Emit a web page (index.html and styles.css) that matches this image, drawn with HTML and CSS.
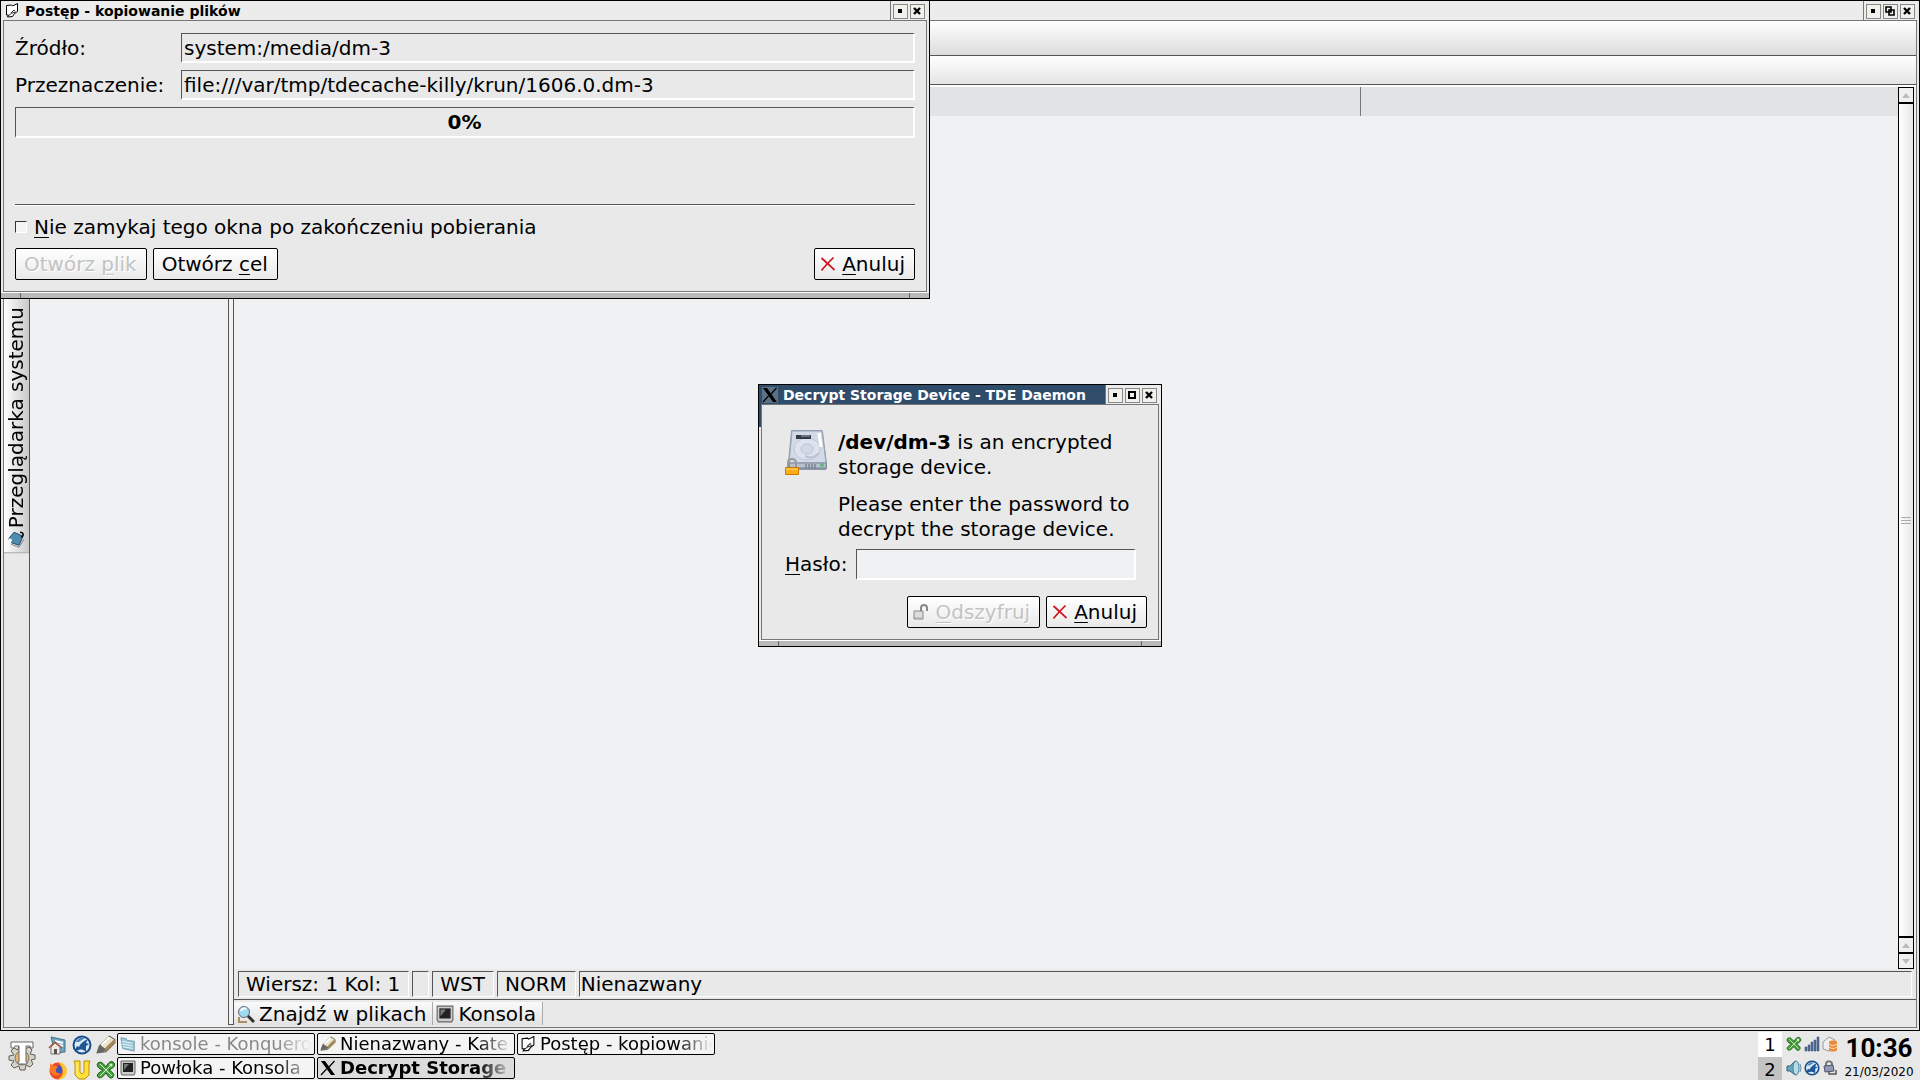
FILE: index.html
```html
<!DOCTYPE html>
<html lang="pl">

<head>
	<meta charset="utf-8">
	<meta name="viewport" content="width=device-width, initial-scale=1.0">
	<title>Decrypt Storage Device - TDE Daemon</title>
	<link rel="stylesheet" href="styles.css">
</head>

<body>
	<svg class="sprite" aria-hidden="true">
		<symbol id="min" viewBox="0 0 11 11"><path d="M3 3h4v4H3z"/></symbol>
		<symbol id="max" viewBox="0 0 11 11"><path d="M1 1h8v8H1zM3 3v4h4V3z" fill-rule="evenodd"/></symbol>
		<symbol id="restore" viewBox="0 0 11 11"><path d="M1 1h5v5H1zM4 4h5v5H4z" fill="none" stroke="#000" stroke-width="1.600"/></symbol>
		<symbol id="close" viewBox="0 0 11 11"><path d="M2 2l6 6M8 2l-6 6" fill="none" stroke="#000" stroke-width="2.400"/></symbol>
		<symbol id="paper" viewBox="0 0 14 15"><path d="M1.500 2.500l5-.500 1 1 5-2.500v8l-3 2-2 3-5 .500 1-2H1.500z" fill="#fff" stroke="#000"/><path d="M3 13l4-3 4-1M6 10l3-3 1 1" fill="none" stroke="#333"/></symbol>
		<symbol id="xorg" viewBox="0 0 16 16"><path d="M1 1h4l10 14h-4z" fill="#000"/><path d="M14.500 1L9 7M6.500 9L1 15" fill="none" stroke="#000" stroke-width="1.200"/></symbol>
		<symbol id="cross" viewBox="0 0 16 16"><path d="M1.500 2C5 5 10 10 14.500 14M13.500 1.500C9 6 5 10 1.500 14.500" fill="none" stroke="#d0101c" stroke-width="1.700"/></symbol>
		<symbol id="pen" viewBox="0 0 18 18"><path d="M1 16l2-6 9-9 5 3v3l-8 8z" fill="#e9e2ce" stroke="#6c6353"/><path d="M7 13l9-9 1 3-8 8z" fill="#a5854f"/><path d="M1 16l2-6 1-1 5 4-2 2z" fill="#666"/><path d="M5 9l7-7" stroke="#fff" stroke-width="2"/></symbol>
		<symbol id="konsole" viewBox="0 0 16 16"><path d="M1 1h14v12l-1 2H2l-1-2z" fill="#ccc" stroke="#666"/><path d="M3 3h10v9H3z" fill="#222"/><path d="M4 4h5l-5 6z" fill="#777"/></symbol>
		<symbol id="globe" viewBox="0 0 20 20"><circle cx="10" cy="10" r="8.500" fill="#dce9f6" stroke="#174e89" stroke-width="2"/><path d="M3 15c1-1 1-3 2-4l2 1c1-3 4-6 9-8l-2 4 3 1-3 2v6c-2-2-4-3-7-2-1 0-2 1-4 0z" fill="#1f5796"/><path d="M3 7l5-4 5 0-6 4z" fill="#4d83bb"/></symbol>
		<symbol id="clover" viewBox="0 0 20 20"><path d="M2 3c3-2 5 0 8 4 2-5 6-7 8-4 2 3-1 5-5 7 4 2 6 5 4 7-3 3-5-1-7-4-3 4-6 6-8 4-2-3 1-4 5-7-5-1-7-5-5-7z" fill="#47a13d" stroke="#1d5a1a"/><path d="M4 4l12 12M14 6L4 16" stroke="#d8f0d0"/><circle cx="15" cy="5" r="1.500" fill="#d8f0d0"/></symbol>
		<symbol id="folder" viewBox="0 0 18 18"><path d="M1 2l6 1 1 2 8 1v11L3 14z" fill="#9cc9da" stroke="#6b93a5"/><path d="M2 6l12 2M2 9l12 2M3 12l11 2" stroke="#e8f6fb"/></symbol>
	</svg>

	<main class="window editor">
		<div class="title">
			<div class="title-buttons">
				<button aria-label="Minimalizuj"><svg><use href="#min"/></svg></button>
				<button aria-label="Przywróć"><svg><use href="#restore"/></svg></button>
				<button aria-label="Zamknij"><svg><use href="#close"/></svg></button>
			</div>
		</div>
		<div class="frame">
			<div class="menubar"></div>
			<div class="toolbar"></div>
			<div class="workspace">
				<nav class="sidebar">
					<button class="side-tab">
						<svg viewBox="0 0 18 18"><path d="M2 8l5-6 9 4-4 9-9-3z" fill="#4d8eb0" stroke="#244c63"/><path d="M2 8l3 1-1 4-2-1z" fill="#fff"/><path d="M4 14l8 3 5-8" fill="none" stroke="#888"/><path d="M13 2c4 0 4 4 1 5" fill="none" stroke="#000" stroke-width="1.500"/></svg>
						<span>Przeglądarka systemu</span>
					</button>
				</nav>
				<div class="list"></div>
				<div class="splitter"></div>
				<section class="document">
					<div class="view">
						<div class="page">
							<div class="line"><span></span><span></span></div>
						</div>
						<div class="scrollbar">
							<button class="arrow up" aria-label="W górę"></button>
							<div class="thumb"><i></i></div>
							<button class="arrow up" aria-label="W górę"></button>
							<button class="arrow down" aria-label="W dół"></button>
						</div>
					</div>
					<div class="status">
						<span class="cell">Wiersz: 1 Kol: 1</span>
						<span class="cell"></span>
						<span class="cell">WST</span>
						<span class="cell">NORM</span>
						<span class="cell name">Nienazwany</span>
					</div>
					<div class="tools">
						<button><svg viewBox="0 0 18 18"><path d="M10 10l7 7" stroke="#333" stroke-width="3"/><path d="M2 12v5h8" fill="none" stroke="#a99060" stroke-width="2"/><circle cx="7" cy="7" r="5.500" fill="#9fdcf0" stroke="#667"/><path d="M4 6c1-3 4-3 5-2" fill="none" stroke="#fff" stroke-width="2"/></svg>Znajdź w plikach</button>
						<button><svg><use href="#konsole"/></svg>Konsola</button>
					</div>
				</section>
			</div>
		</div>
	</main>

	<section class="window progress">
		<div class="title">
			<svg class="title-icon"><use href="#paper"/></svg>
			<h2>Postęp - kopiowanie plików</h2>
			<div class="title-buttons">
				<button aria-label="Minimalizuj"><svg><use href="#min"/></svg></button>
				<button aria-label="Zamknij"><svg><use href="#close"/></svg></button>
			</div>
		</div>
		<form class="frame">
			<div class="paths">
				<label for="source">Źródło:</label>
				<input class="field" id="source" type="text" value="system:/media/dm-3" readonly>
				<label for="target">Przeznaczenie:</label>
				<input class="field" id="target" type="text" value="file:///var/tmp/tdecache-killy/krun/1606.0.dm-3" readonly>
			</div>
			<div class="bar" role="progressbar" aria-valuenow="0">0%</div>
			<hr>
			<label class="keep"><input type="checkbox"><span><u>N</u>ie zamykaj tego okna po zakończeniu pobierania</span></label>
			<div class="buttons">
				<button class="push" type="button" disabled><span>Otwórz <u>p</u>lik</span></button>
				<button class="push" type="button"><span>Otwórz <u>c</u>el</span></button>
				<button class="push cancel" type="button"><svg><use href="#cross"/></svg><span><u>A</u>nuluj</span></button>
			</div>
		</form>
		<div class="grip"></div>
	</section>

	<section class="window decrypt">
		<div class="title">
			<svg class="title-icon"><use href="#xorg"/></svg>
			<h2>Decrypt Storage Device - TDE Daemon</h2>
			<div class="title-buttons">
				<button aria-label="Minimalizuj"><svg><use href="#min"/></svg></button>
				<button aria-label="Maksymalizuj"><svg><use href="#max"/></svg></button>
				<button aria-label="Zamknij"><svg><use href="#close"/></svg></button>
			</div>
		</div>
		<form class="frame">
			<div class="message">
				<svg class="disk" viewBox="0 0 44 47">
					<path d="M6 2q0-1 2-1h28q2 0 2 2l4 32v4q0 2-2 2H5q-2 0-2-2v-5z" fill="#8d97ab"/>
					<path d="M7 2h30l4 32H4z" fill="#d3dae7" stroke="#9aa5b8"/>
					<path d="M4 34h37v5H5z" fill="#b8c0ce" stroke="#7c879b"/>
					<ellipse cx="22" cy="20" rx="13" ry="11" fill="#dde3ee" stroke="#c0c8d6"/>
					<ellipse cx="22" cy="20" rx="6" ry="5" fill="#d3dae7" stroke="#b9c2d1"/>
					<path d="M20 27q8 4 14-3" fill="none" stroke="#b9c2d1" stroke-width="2"/>
					<path d="M11 6h15v4H11z" fill="#333a46"/><path d="M16 7h9" stroke="#aaa"/>
					<path d="M34 4l2 14" stroke="#fff" stroke-width="3"/>
					<path d="M21 35v4M24 35v4M27 35v4M30 35v4" stroke="#5c6577"/>
					<circle cx="37" cy="36" r="2" fill="#63b77c"/>
					<path d="M3 38v-4q0-4 4-4t4 4v4" fill="none" stroke="#999" stroke-width="2"/>
					<path d="M.500 38.500h13v7H.500z" fill="#ffae18" stroke="#c77904"/><path d="M1 40h12" stroke="#ffd45c"/>
				</svg>
				<div>
					<p><b>/dev/dm-3</b> is an encrypted storage device.</p>
					<p>Please enter the password to decrypt the storage device.</p>
				</div>
			</div>
			<div class="password">
				<label for="password"><u>H</u>asło:</label>
				<input class="field" id="password" type="password">
			</div>
			<div class="buttons">
				<button class="push" type="button" disabled><svg viewBox="0 0 16 16"><path d="M1 7h9v8H1z" fill="#ddd" stroke="#888"/><path d="M8 7V4c0-4 6-4 6 0v3" fill="none" stroke="#888" stroke-width="2"/><path d="M2 14h8" stroke="#aaa"/></svg><span><u>O</u>dszyfruj</span></button>
				<button class="push" type="button"><svg><use href="#cross"/></svg><span><u>A</u>nuluj</span></button>
			</div>
		</form>
		<div class="grip"></div>
	</section>

	<footer class="taskbar">
		<button class="start" aria-label="Menu">
			<svg viewBox="0 0 30 30"><path d="M12 4h5l1 4 4-2 3 3-2 4 5 1v4l-4 1 2 4-3 3-4-2-1 5h-5l-1-4-5 2-3-3 3-4-5-1v-4l5-1-3-4 3-3 4 2z" fill="#d5d2c8" stroke="#625e56"/><circle cx="15" cy="17" r="7" fill="#e3b86f" stroke="#777"/><path d="M4 1h22v6h-2l-1-2h-4v16h1v2h-9v-2h1V5H8L7 7H4z" fill="#fff" stroke="#666"/></svg>
		</button>
		<div class="launchers">
			<button aria-label="Katalog domowy"><svg viewBox="0 0 20 20"><path d="M3 2l14 3v12l-10 1z" fill="#6da4c4" stroke="#46718a"/><path d="M7 6l8 2M7 9l8 2" stroke="#fff" stroke-width="2"/><path d="M3 12v7h9v-7L7 8z" fill="#f1e8de" stroke="#777"/><path d="M1 13l6-6 7 6" fill="none" stroke="#9b5c43" stroke-width="1.500"/><path d="M6 14h3v5H6z" fill="#555"/></svg></button>
			<button aria-label="Konqueror"><svg><use href="#globe"/></svg></button>
			<button aria-label="Kate"><svg><use href="#pen"/></svg></button>
			<button aria-label="Firefox"><svg viewBox="0 0 20 20"><circle cx="10" cy="11" r="8.500" fill="#f04a22"/><path d="M10 2c5 0 9 5 9 10-1 5-5 8-9 7 4-2 6-6 4-10 0-3-2-5-4-7z" fill="#ffc52e"/><circle cx="10" cy="10" r="4.500" fill="#3f55c0"/><path d="M2 3c1 2 3 3 6 3 2 0 2 2 0 3-1 3 1 5 5 4-3 4-9 3-11-2z" fill="#fa7a24"/></svg></button>
			<button aria-label="Magnes"><svg viewBox="0 0 20 20"><path d="M2 1h6v11l2 2 2-2V1h6l-1 3v11l-4 4H7l-4-4V4z" fill="#ffdf3a" stroke="#bf9108"/><path d="M5 3v11l3 3" fill="none" stroke="#fff3a0"/></svg></button>
			<button aria-label="Narzędzia"><svg><use href="#clover"/></svg></button>
		</div>
		<div class="tasks">
			<button class="minimized"><svg><use href="#folder"/></svg><span>konsole - Konquero</span></button>
			<button><svg><use href="#pen"/></svg><span>Nienazwany - Kate</span></button>
			<button><svg><use href="#paper"/></svg><span>Postęp - kopiowanie</span></button>
			<button><svg><use href="#konsole"/></svg><span>Powłoka - Konsola</span></button>
			<button class="active"><svg><use href="#xorg"/></svg><span>Decrypt Storage</span></button>
		</div>
		<div class="pager">
			<button class="current">1</button>
			<button>2</button>
		</div>
		<div class="tray">
			<svg><use href="#clover"/></svg>
			<svg viewBox="0 0 16 16"><path d="M1 11h2v4H1zM4 9h2v6H4zM7 6h2v9H7zM10 4h2v11h-2zM13 1h2v14h-2z" fill="#536f9c" stroke="#33486d" stroke-width=".5"/></svg>
			<svg viewBox="0 0 16 16"><path d="M1 6l6-5 6 3v9l-6 2-6-2z" fill="#eee" stroke="#999"/><path d="M7 6c0-2 8-2 8 0v8c0 2-8 2-8 0z" fill="#e98a39"/><path d="M7 8c2 2 6 2 8 0M7 11c2 2 6 2 8 0" fill="none" stroke="#ffe0b8"/></svg>
			<svg viewBox="0 0 16 16"><path d="M1 6h3l5-5v14l-5-4H1z" fill="#65a6bd" stroke="#3b6678"/><ellipse cx="10" cy="8" rx="3" ry="7" fill="#b7dce8" stroke="#4b7d91"/><path d="M14 4q2 4 0 8" fill="none" stroke="#5a91a5"/></svg>
			<svg><use href="#globe"/></svg>
			<svg viewBox="0 0 16 16"><path d="M4 7V4c0-4 6-3 6 0v2" fill="none" stroke="#777" stroke-width="2"/><path d="M2 6l9-1 1 6-9 1z" fill="#9299b5" stroke="#4c526e"/><path d="M7 12v2h7v-4" fill="none" stroke="#555" stroke-width="1.500"/></svg>
		</div>
		<div class="clock">
			<time class="hour">10:36</time>
			<time class="date">21/03/2020</time>
		</div>
	</footer>
</body>

</html>
```
FILE: styles.css
```css
* {
	margin: 0;
	padding: 0;
	box-sizing: border-box;
}

body {
	height: 100vh;
	display: flex;
	flex-direction: column;
	overflow: hidden;
	background: #e8e8e8;
	font-family: "DejaVu Sans", sans-serif;
	font-size: 20px;
	line-height: 25px;
	color: #000;
}

button,
input {
	font: inherit;
	color: inherit;
	border: none;
	background: none;
	border-radius: 0;
}

svg {
	display: block;
	flex: none;
	width: 16px;
	height: 16px;
}

.sprite {
	position: absolute;
	width: 0;
	height: 0;
}

u {
	text-decoration-thickness: 1px;
	text-underline-offset: 3px;
}

/* windows */

.window {
	display: flex;
	flex-direction: column;
	background: #e9e9e9;
	border: 1px solid #000;
	padding: 0 2px;
}

.title {
	display: flex;
	align-items: center;
	height: 19px;
	background: #ececec;
	flex: none;
}

.title h2 {
	flex: 1;
	font-size: 14px;
	line-height: 18px;
	white-space: nowrap;
}

.title-icon {
	width: 14px;
	height: 15px;
	margin: 0 6px 0 2px;
}

.title-buttons {
	display: flex;
	align-items: center;
	gap: 2px;
	height: 19px;
	margin-left: auto;
	padding: 2px 2px 0;
	background: #ececec;
	border-left: 1px solid #777;
}

.title-buttons button {
	width: 15px;
	height: 15px;
	padding: 1px;
	background: #f1f1ec;
	border: 1px solid #888;
}

.title-buttons svg {
	width: 11px;
	height: 11px;
}

.frame {
	border: 1px solid #777;
}

.grip {
	display: flex;
	justify-content: space-between;
	height: 6px;
	margin: 0 -2px;
	background: #b9b9b9;
	border-top: 1px solid #fff;
}

.grip::before,
.grip::after {
	content: "";
	width: 19px;
	border-right: 1px solid #666;
}

.grip::after {
	border-right: none;
	border-left: 1px solid #666;
}

.field {
	min-width: 0;
	height: 30px;
	padding: 0 2px;
	border: 1px solid #555;
	border-right: 2px solid #fff;
	border-bottom: 2px solid #fff;
	outline: none;
}

.push {
	display: flex;
	align-items: center;
	gap: 6px;
	height: 32px;
	padding: 0 9px 0 8px;
	border: 1px solid #000;
	border-radius: 2px;
	background: linear-gradient(#fff, #e9e9e9);
	white-space: pre;
}

.push:disabled {
	color: #c3c3c3;
	text-shadow: 1px 1px #fff;
}

.push svg {
	margin-left: -3px;
}

.buttons {
	display: flex;
	gap: 6px;
}

/* editor */

.editor {
	flex: 1;
	min-height: 0;
	padding-bottom: 2px;
}

.editor > .frame {
	flex: 1;
	min-height: 0;
	display: flex;
	flex-direction: column;
}

.menubar {
	height: 35px;
	background: linear-gradient(#fff, #dcdcdc);
	border-bottom: 1px solid #555;
}

.toolbar {
	height: 29px;
	background: linear-gradient(#fff, #e4e4e4);
	border-bottom: 1px solid #555;
}

.workspace {
	flex: 1;
	min-height: 0;
	display: flex;
	border-top: 2px solid #fff;
}

.sidebar {
	width: 26px;
	padding-top: 212px;
	border-right: 1px solid #555;
}

.side-tab {
	display: flex;
	align-items: center;
	gap: 2px;
	width: 25px;
	padding: 4px 0 8px;
	writing-mode: vertical-rl;
	transform: rotate(180deg);
	background: linear-gradient(to left, #fff, #c8c8c8);
	border-top: 1px solid #aaa;
}

.side-tab svg {
	width: 18px;
	height: 18px;
	transform: rotate(180deg);
}

.list {
	width: 198px;
	background: #eff1f3;
}

.splitter {
	width: 6px;
	margin-bottom: 2px;
	background: #f2f2f2;
	border: 1px solid #555;
	border-top: none;
}

.document {
	flex: 1;
	min-width: 0;
	display: flex;
	flex-direction: column;
}

.view {
	flex: 1;
	min-height: 0;
	display: flex;
	padding-right: 2px;
	background: #eff1f3;
}

.page {
	flex: 1;
}

.line {
	display: grid;
	grid-template-columns: 1126fr 538fr;
	height: 29px;
	background: #e2e3e4;
}

.line span + span {
	border-left: 1px solid #777;
}

.scrollbar {
	display: flex;
	flex-direction: column;
	width: 16px;
	border: 1px solid #000;
	background: #fff;
}

.arrow {
	display: flex;
	align-items: center;
	justify-content: center;
	height: 16px;
	background: #f0f0f0;
	border-bottom: 2px solid #000;
}

.arrow::before {
	content: "";
	border: 4px solid transparent;
	border-top: none;
	border-bottom: 5px solid #bbb;
}

.arrow.down {
	height: 14px;
	border-bottom: none;
}

.arrow.down::before {
	border-bottom: none;
	border-top: 5px solid #bbb;
}

.thumb {
	flex: 1;
	display: flex;
	align-items: center;
	justify-content: center;
	background: linear-gradient(to right, #fff, #e6e6e6);
	border-bottom: 2px solid #000;
}

.thumb i {
	width: 10px;
	height: 7px;
	border: 1px solid #aaa;
	border-width: 1px 0;
	background: linear-gradient(transparent 40%, #aaa 40%, #aaa 60%, transparent 60%);
}

.status {
	display: flex;
	gap: 3px;
	padding: 2px 4px;
	border-bottom: 1px solid #555;
}

.cell {
	height: 26px;
	padding: 0 8px 0 7px;
	border: 1px solid #555;
	border-right-color: #fff;
	border-bottom-color: #fff;
}

.cell.name {
	flex: 1;
	padding: 0 1px;
}

.tools {
	display: flex;
	height: 27px;
	padding: 2px 0;
}

.tools button {
	display: flex;
	align-items: center;
	gap: 4px;
	padding: 1px 6px 0 3px;
	background: linear-gradient(#fafafa, #e2e2e2);
	border-right: 1px solid #aaa;
}

.tools svg {
	width: 18px;
	height: 18px;
}

/* copy progress */

.progress {
	position: absolute;
	top: 0;
	left: 0;
	width: 930px;
}

.progress .frame {
	padding: 12px 11px 11px 11px;
}

.paths {
	display: grid;
	grid-template-columns: 158px 1fr;
	align-items: center;
	gap: 7px 8px;
}

.bar {
	height: 31px;
	margin-top: 7px;
	text-align: center;
	line-height: 29px;
	font-weight: bold;
	border: 1px solid #555;
	border-right: 2px solid #fff;
	border-bottom: 2px solid #fff;
}

.progress hr {
	margin: 66px 0 8px;
	border: none;
	border-top: 1px solid #555;
	border-bottom: 1px solid #fff;
}

.keep {
	display: flex;
	align-items: center;
	gap: 7px;
	height: 26px;
}

.keep input {
	appearance: none;
	width: 12px;
	height: 12px;
	background: #f4f4f4;
	border: 1px solid #333;
	border-right-color: #fff;
	border-bottom-color: #fff;
}

.progress .buttons {
	margin-top: 8px;
}

.cancel {
	margin-left: auto;
}

/* password dialog */

.decrypt {
	position: absolute;
	top: 384px;
	left: 758px;
	width: 404px;
	background: linear-gradient(#2f4c6b, #2f4c6b) 0 0 / 2px 42px no-repeat #e9e9e9;
}

.decrypt .title {
	margin: 0 -2px;
	padding-right: 2px;
	background: linear-gradient(to right, #2f4c6b 400px, #ececec 400px);
	color: #fff;
}

.decrypt .title-icon {
	width: 16px;
	height: 16px;
	margin: 0 5px 0 3px;
	background: #5b7185;
}

.decrypt .frame {
	padding: 20px 11px 11px 23px;
}

.message {
	display: flex;
	gap: 9px;
}

.message p {
	margin-bottom: 12px;
}

.disk {
	width: 44px;
	height: 47px;
	margin-top: 4px;
}

.message p:first-child {
	margin-top: 5px;
}

.message p:last-child {
	margin-bottom: 7px;
}

.password {
	display: flex;
	align-items: center;
	gap: 9px;
	margin-right: 11px;
}

.password .field {
	flex: 1;
	height: 31px;
	background: #eff1f3;
}

.decrypt .buttons {
	justify-content: flex-end;
	margin-top: 16px;
}

/* taskbar */

.taskbar {
	display: flex;
	height: 49px;
	flex: none;
	background: #e8e8e8;
	font-size: 18px;
}

.start {
	width: 44px;
	padding-left: 7px;
}

.start svg {
	width: 30px;
	height: 30px;
}

.launchers {
	display: grid;
	grid-template-columns: repeat(3, 20px);
	gap: 4px;
	padding: 4px 1px 0 4px;
}

.launchers svg {
	width: 20px;
	height: 20px;
}

.tasks {
	flex: 1;
	display: grid;
	grid-template-columns: repeat(3, 198px);
	grid-template-rows: 22px 22px;
	gap: 2px;
	padding-top: 2px;
}

.tasks button {
	display: flex;
	align-items: center;
	gap: 4px;
	padding: 0 2px;
	line-height: 20px;
	background: #f4f4f4;
	border: 1px solid #000;
	border-radius: 2px;
	overflow: hidden;
}

.tasks span {
	flex: 1;
	min-width: 0;
	text-align: left;
	white-space: nowrap;
	overflow: hidden;
	mask-image: linear-gradient(to right, #000 80%, transparent);
}

.tasks .minimized {
	color: #888;
}

.tasks .active {
	background: #dcdcdc;
	font-weight: bold;
}

.pager {
	display: flex;
	flex-direction: column;
	width: 24px;
	margin-right: 4px;
	padding-top: 1px;
}

.pager button {
	flex: 1;
	background: #c3c3c3;
}

.pager .current {
	background: #fff;
}

.tray {
	display: grid;
	grid-template-columns: repeat(3, 16px);
	align-content: center;
	gap: 8px 2px;
}

.clock {
	display: flex;
	flex-direction: column;
	align-items: center;
	width: 82px;
	font-size: 12px;
}

.hour {
	font-family: Roboto, sans-serif;
	font-size: 26px;
	font-weight: bold;
	line-height: 34px;
}

.date {
	line-height: 14px;
}
```
